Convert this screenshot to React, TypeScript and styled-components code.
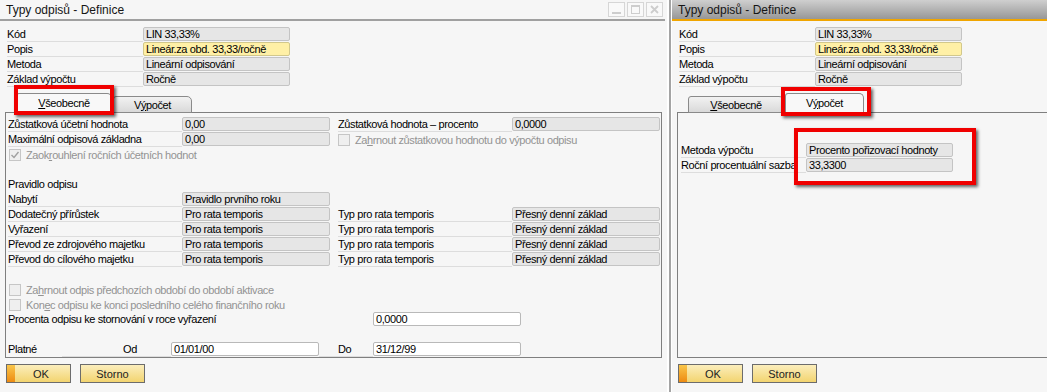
import React from 'react';
import styled, { createGlobalStyle, css } from 'styled-components';

const GlobalStyle = createGlobalStyle`
  html, body {
    margin: 0;
    padding: 0;
    background: #ffffff;
    overflow: hidden;
  }
  body {
    font-family: "Liberation Sans", Arial, sans-serif;
  }
`;

const Screen = styled.div`
  display: flex;
  width: 1047px;
  height: 392px;
  overflow: hidden;
  background: #ffffff;
`;

const Window = styled.div<{ $width: number }>`
  position: relative;
  flex: none;
  width: ${({ $width }) => $width}px;
  height: 392px;
  display: flex;
  flex-direction: column;
  background: #f6f6f6;
  font-size: 11px;
  letter-spacing: -0.4px;
  color: #000;
`;

const Divider = styled.div`
  flex: none;
  width: 2px;
  margin: 0 1px 0 2px;
  background: #a4a4a4;
`;

const TitleBar = styled.div<{ $active?: boolean }>`
  flex: none;
  height: 19px;
  display: flex;
  align-items: center;
  justify-content: space-between;
  padding: 0 2px 0 6px;
  margin-right: ${({ $active }) => ($active ? 0 : 2)}px;
  border-bottom: 2px solid ${({ $active }) => ($active ? '#f0a500' : '#a0a0a0')};
  background: ${({ $active }) => ($active ? 'linear-gradient(#cfcfcf, #979797)' : '#f6f6f6')};
`;

const Title = styled.span`
  font-size: 12px;
  letter-spacing: 0;
  color: #151515;
`;

const WinButtons = styled.div`
  display: flex;
  gap: 2px;
  align-self: flex-start;
  margin-top: 2px;
`;

const WinButton = styled.div`
  width: 17px;
  height: 15px;
  box-sizing: border-box;
  border: 1px solid #d6d6d6;
  background: #f9f9f9;
  display: flex;
  align-items: center;
  justify-content: center;
`;

const Header = styled.div`
  display: flex;
  flex-direction: column;
  padding: 6px 0 0 7px;
`;

const Row = styled.div`
  display: flex;
  align-items: flex-start;
  height: 15px;
  flex: none;
`;

const Label = styled.div<{ $w: number; $line?: boolean; $indent?: number }>`
  flex: none;
  width: ${({ $w }) => $w}px;
  height: 15px;
  line-height: 14px;
  box-sizing: border-box;
  padding-left: ${({ $indent }) => $indent || 0}px;
  border-bottom: 1px solid ${({ $line }) => ($line ? '#dddddd' : 'transparent')};
  white-space: nowrap;
`;

const Gap = styled.div<{ $w: number }>`
  flex: none;
  width: ${({ $w }) => $w}px;
`;

const Field = styled.div<{ $w: number; $tone?: 'gray' | 'yellow' | 'white' }>`
  flex: none;
  width: ${({ $w }) => $w}px;
  height: 14px;
  box-sizing: border-box;
  padding: 0 2px;
  line-height: 12px;
  border-radius: 2px;
  white-space: nowrap;
  overflow: hidden;
  ${({ $tone }) =>
    $tone === 'yellow'
      ? css`
          background: #fff0a6;
          border: 1px solid #d2c88c;
        `
      : $tone === 'white'
      ? css`
          background: #ffffff;
          border: 1px solid #b9b9b9;
        `
      : css`
          background: #e6e6e6;
          border: 1px solid #c4c4c4;
        `}
`;

const TabStrip = styled.div`
  flex: none;
  height: 26px;
  margin-bottom: -1px;
  display: flex;
  align-items: flex-end;
  gap: 1px;
  padding-left: 16px;
  position: relative;
  z-index: 1;
`;

const Tab = styled.div<{ $w: number; $active?: boolean }>`
  width: ${({ $w }) => $w}px;
  height: ${({ $active }) => ($active ? 20 : 17)}px;
  box-sizing: border-box;
  border: 1px solid #8a8a8a;
  border-radius: 3px 5px 0 0;
  display: flex;
  align-items: center;
  justify-content: center;
  ${({ $active }) =>
    $active
      ? css`
          background: #f8f8f8;
          border-bottom-color: #f8f8f8;
        `
      : css`
          background: linear-gradient(#f2f2f2, #d9d9d9);
        `}
`;

const U = styled.span`
  text-decoration: underline;
`;

const Panel = styled.div<{ $padTop: number; $padLeft: number }>`
  flex: none;
  height: 246px;
  margin: 0 5px;
  box-sizing: border-box;
  border: 1px solid #7f7f7f;
  padding: ${({ $padTop, $padLeft }) => `${$padTop}px 0 0 ${$padLeft}px`};
  display: flex;
  flex-direction: column;
  background: #f6f6f6;
`;

const Check = styled.div`
  display: flex;
  align-items: center;
  height: 15px;
  color: #939393;
  white-space: nowrap;
`;

const Box = styled.span`
  flex: none;
  width: 12px;
  height: 12px;
  box-sizing: border-box;
  margin: 0 5px 0 1px;
  border: 1px solid #c6c6c6;
  background: #efefef;
  display: inline-flex;
  align-items: center;
  justify-content: center;
`;

const ButtonBar = styled.div`
  display: flex;
  gap: 9px;
  padding: 6px 0 0 6px;
`;

const Button = styled.div<{ $primary?: boolean }>`
  width: 65px;
  height: 19px;
  box-sizing: border-box;
  border: 1px solid #6c6c6c;
  display: flex;
  align-items: center;
  justify-content: center;
  color: #222;
  letter-spacing: 0;
  background: linear-gradient(#fbeebc, #f3d470);
  ${({ $primary }) =>
    $primary &&
    css`
      padding-left: 5px;
      background: linear-gradient(#f9c64a, #ee8b12) left / 8px 100% no-repeat,
        linear-gradient(#fbeebc, #f3d470);
    `}
`;

const Highlight = styled.div<{ $x: number; $y: number; $w: number; $h: number }>`
  position: absolute;
  left: ${({ $x }) => $x}px;
  top: ${({ $y }) => $y}px;
  width: ${({ $w }) => $w}px;
  height: ${({ $h }) => $h}px;
  box-sizing: border-box;
  border: 4px solid #f00000;
  box-shadow: 2px 2px 3px rgba(0, 0, 0, 0.6);
  pointer-events: none;
  z-index: 5;
`;

const CheckBox = ({ checked, children }: { checked?: boolean; children: React.ReactNode }) => (
  <Check>
    <Box>
      {checked && (
        <svg width="10" height="10" viewBox="0 0 10 10">
          <path d="M1.5 5 L4 7.5 L8.5 2" fill="none" stroke="#a0a0a0" strokeWidth="1.4" />
        </svg>
      )}
    </Box>
    <span>{children}</span>
  </Check>
);

const WindowControls = () => (
  <WinButtons>
    <WinButton>
      <svg width="11" height="11" viewBox="0 0 11 11">
        <rect x="1" y="8" width="9" height="2" fill="#cdcdcd" />
      </svg>
    </WinButton>
    <WinButton>
      <svg width="11" height="11" viewBox="0 0 11 11">
        <rect x="1.5" y="1.5" width="8" height="8" fill="none" stroke="#cdcdcd" />
        <rect x="1" y="1" width="9" height="2" fill="#cdcdcd" />
      </svg>
    </WinButton>
    <WinButton>
      <svg width="11" height="11" viewBox="0 0 11 11">
        <path d="M2 2 L9 9 M9 2 L2 9" stroke="#cdcdcd" strokeWidth="1.8" />
      </svg>
    </WinButton>
  </WinButtons>
);

const headerRows = [
  { label: 'Kód', value: 'LIN 33,33%' },
  { label: 'Popis', value: 'Lineár.za obd. 33,33/ročně', tone: 'yellow' as const },
  { label: 'Metoda', value: 'Lineární odpisování' },
  { label: 'Základ výpočtu', value: 'Ročně' },
];

const HeaderFields = () => (
  <Header>
    {headerRows.map((r) => (
      <Row key={r.label}>
        <Label $w={136} $line>
          {r.label}
        </Label>
        <Field $w={147} $tone={r.tone}>
          {r.value}
        </Field>
      </Row>
    ))}
  </Header>
);

const Tabs = ({ active }: { active: 0 | 1 }) => (
  <TabStrip>
    <Tab $w={96} $active={active === 0}>
      <span>
        <U>V</U>šeobecně
      </span>
    </Tab>
    <Tab $w={79} $active={active === 1}>
      <span>
        V<U>ý</U>počet
      </span>
    </Tab>
  </TabStrip>
);

const transferRows = [
  'Dodatečný přírůstek',
  'Vyřazení',
  'Převod ze zdrojového majetku',
  'Převod do cílového majetku',
];

const GeneralTab = () => (
  <Panel $padTop={4} $padLeft={2}>
    <Row>
      <Label $w={174} $line>Zůstatková účetní hodnota</Label>
      <Field $w={148}>0,00</Field>
      <Gap $w={8} />
      <Label $w={174} $line>Zůstatková hodnota – procento</Label>
      <Field $w={148}>0,0000</Field>
    </Row>
    <Row>
      <Label $w={174} $line>Maximální odpisová základna</Label>
      <Field $w={148}>0,00</Field>
      <Gap $w={7} />
      <CheckBox>
        Za<U>h</U>rnout zůstatkovou hodnotu do výpočtu odpisu
      </CheckBox>
    </Row>
    <Row>
      <CheckBox checked>
        Zaok<U>r</U>ouhlení ročních účetních hodnot
      </CheckBox>
    </Row>
    <Row />
    <Row>
      <Label $w={174}>Pravidlo odpisu</Label>
    </Row>
    <Row>
      <Label $w={174} $line>Nabytí</Label>
      <Field $w={148}>Pravidlo prvního roku</Field>
    </Row>
    {transferRows.map((t) => (
      <Row key={t}>
        <Label $w={174} $line>{t}</Label>
        <Field $w={148}>Pro rata temporis</Field>
        <Gap $w={8} />
        <Label $w={174} $line>Typ pro rata temporis</Label>
        <Field $w={148}>Přesný denní základ</Field>
      </Row>
    ))}
    <Row />
    <Row>
      <CheckBox>
        Za<U>h</U>rnout odpis předchozích období do období aktivace
      </CheckBox>
    </Row>
    <Row>
      <CheckBox>
        Kon<U>e</U>c odpisu ke konci posledního celého finančního roku
      </CheckBox>
    </Row>
    <Row>
      <Label $w={365}>Procenta odpisu ke stornování v roce vyřazení</Label>
      <Field $w={148} $tone="white">0,0000</Field>
    </Row>
    <Row />
    <Row>
      <Label $w={54}>Platné</Label>
      <Label $w={109} $line $indent={61}>Od</Label>
      <Field $w={148} $tone="white">01/01/00</Field>
      <Label $w={54} $line $indent={19}>Do</Label>
      <Field $w={148} $tone="white">31/12/99</Field>
    </Row>
  </Panel>
);

const CalcTab = () => (
  <Panel $padTop={30} $padLeft={3}>
    <Row>
      <Label $w={125} $line>Metoda výpočtu</Label>
      <Field $w={147}>Procento pořizovací hodnoty</Field>
    </Row>
    <Row>
      <Label $w={125} $line>Roční procentuální sazba</Label>
      <Field $w={147}>33,3300</Field>
    </Row>
  </Panel>
);

const Buttons = () => (
  <ButtonBar>
    <Button $primary>OK</Button>
    <Button>Storno</Button>
  </ButtonBar>
);

export default function App() {
  return (
    <>
      <GlobalStyle />
      <Screen>
        <Window $width={667}>
          <TitleBar>
            <Title>Typy odpisů - Definice</Title>
            <WindowControls />
          </TitleBar>
          <HeaderFields />
          <Tabs active={0} />
          <GeneralTab />
          <Buttons />
          <Highlight $x={14} $y={85} $w={100} $h={30} />
        </Window>
        <Divider />
        <Window $width={460}>
          <TitleBar $active>
            <Title>Typy odpisů - Definice</Title>
          </TitleBar>
          <HeaderFields />
          <Tabs active={1} />
          <CalcTab />
          <Buttons />
          <Highlight $x={109} $y={87} $w={90} $h={29} />
          <Highlight $x={122} $y={128} $w={182} $h={57} />
        </Window>
      </Screen>
    </>
  );
}
